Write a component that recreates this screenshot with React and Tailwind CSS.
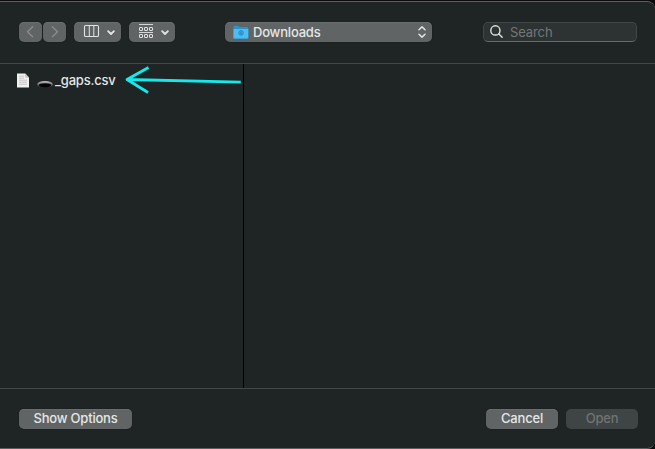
import React from "react";

const button =
  "flex h-5 shrink-0 items-center rounded-[5px] bg-[#606464] shadow-[inset_0_1px_0_#6b6e6e,0_0_1px_#101414]";

function Chevron({ flip }) {
  return (
    <svg className="h-5 w-[23px]" viewBox="0 0 23 20" fill="none" stroke="#8c8f8f" strokeWidth="1.2" strokeLinecap="round" strokeLinejoin="round">
      <path d={flip ? "M9.3 4.7 14.5 9.7 9.3 14.7" : "M13.7 4.7 8.5 9.7 13.7 14.7"} />
    </svg>
  );
}

function ColumnsMenu() {
  return (
    <svg className="h-5 w-[47px]" viewBox="0 0 47 20" fill="none" stroke="#e2e4e4">
      <rect x="10.5" y="3.5" width="14" height="11" rx="1.3" strokeWidth="1.1" />
      <path d="M15.3 4v10.500M19.8 4v10.500" strokeWidth="1" />
      <path d="m34.1 9.1 2.9 2.9 2.9-2.900" strokeWidth="1.8" strokeLinecap="round" strokeLinejoin="round" />
    </svg>
  );
}

function GroupMenu() {
  return (
    <svg className="h-5 w-[46px]" viewBox="0 0 46 20" fill="none" stroke="#e2e4e4">
      <path d="M10 2.500h14M10 10.500h14" strokeWidth="0.900" />
      <g strokeWidth="1">
        <rect x="10.500" y="5.500" width="3" height="3" rx=".5" />
        <rect x="15.500" y="5.500" width="3" height="3" rx=".5" />
        <rect x="20.500" y="5.500" width="3" height="3" rx=".5" />
        <rect x="10.500" y="12.500" width="3" height="3" rx=".5" />
        <rect x="15.500" y="12.500" width="3" height="3" rx=".5" />
        <rect x="20.500" y="12.500" width="3" height="3" rx=".5" />
      </g>
      <path d="m33.1 9.1 2.9 2.9 2.9-2.900" strokeWidth="1.8" strokeLinecap="round" strokeLinejoin="round" />
    </svg>
  );
}

function FolderIcon() {
  return (
    <svg className="h-[15px] w-4 shrink-0" viewBox="0 0 16 15">
      <path d="M.5 2Q.5.8 1.700.8h3.600l1.300 1.100h7.500q1.200 0 1.200 1.200v9.800q0 1.100-1.200 1.100H1.700Q.5 14 .5 12.900Z" fill="#2795d2" />
      <path d="M.5 4h14.800v8.900q0 1.100-1.200 1.100H1.700Q.5 14 .5 12.900Z" fill="#4fbdf1" />
      <path d="M.8 13.400h14.200" stroke="#2c9bd6" strokeWidth=".8" />
      <circle cx="8" cy="7.900" r="2.300" fill="#3ba6dc" stroke="#2589bd" strokeWidth=".9" />
      <path d="M8 6.800v2M7.200 8.100l.8.8.8-.8" stroke="#2581b2" strokeWidth=".6" fill="none" />
    </svg>
  );
}

function FileIcon() {
  return (
    <svg className="h-[15px] w-3 shrink-0" viewBox="0 0 12 15">
      <path d="M0 .5h8.200L12 4.400v10H0Z" fill="#f0f0f0" />
      <path d="M8.200.5v3.900H12Z" fill="#bfc1c1" />
      <path d="M2 3.200h5M2 5.200h5M2 7.200h8M2 9.200h8M2 11.200h8" stroke="#b4b6b6" strokeWidth=".7" />
    </svg>
  );
}

function HoleIcon() {
  return (
    <svg className="h-[7px] w-4 shrink-0" viewBox="0 0 16 7">
      <defs>
        <linearGradient id="rim" x1="0" y1="0" x2="0" y2="1">
          <stop offset="0" stopColor="#c2c5c5" />
          <stop offset=".5" stopColor="#6a6e6e" />
          <stop offset="1" stopColor="#303434" />
        </linearGradient>
      </defs>
      <ellipse cx="8" cy="3.400" rx="7.800" ry="3.300" fill="url(#rim)" />
      <ellipse cx="8" cy="4.300" rx="6.300" ry="2.100" fill="#030404" />
    </svg>
  );
}

export default function App() {
  return (
    <div className="h-[449px] w-[655px] overflow-hidden bg-[#090b0c] pt-px font-['Inter','Liberation_Sans',sans-serif] text-[13px] font-medium tracking-[-0.2px] text-[#e5e7e7]">
      <div className="flex h-[448px] flex-col rounded-r-[8px] border-y border-t-[#5c5f60] border-b-[#5c5f60] bg-[#1f2424]">
        <header className="flex h-[62px] shrink-0 items-start border-b border-[#424747] pt-5 pl-[19px]">
          <div className="flex gap-px">
            <button className={`${button} w-[23px]`} aria-label="Back"><Chevron /></button>
            <button className={`${button} w-[23px]`} aria-label="Forward"><Chevron flip /></button>
          </div>
          <button className={`${button} ml-2 w-[47px]`} aria-label="Columns"><ColumnsMenu /></button>
          <button className={`${button} ml-2 w-[46px]`} aria-label="Group"><GroupMenu /></button>
          <button className={`${button} ml-[50px] w-[207px] pl-2`}>
            <FolderIcon />
            <span className="ml-1 -mt-px leading-5">Downloads</span>
            <svg className="mr-[6px] ml-auto h-5 w-2" viewBox="0 0 8 20" fill="none" stroke="#e2e4e4" strokeWidth="1.500" strokeLinecap="round" strokeLinejoin="round">
              <path d="M1 7.700 4 4.900l3 2.800M1 12.300l3 2.800 3-2.800" />
            </svg>
          </button>
          <div className="ml-[51px] flex h-5 w-[154px] items-center rounded-[5px] border border-[#414646] border-b-[#666a6a] bg-[#2d3232] pl-[6px] font-normal tracking-[-0.1px] text-[#747878]">
            <svg className="h-[14px] w-[14px]" viewBox="0 0 14 14" fill="none" stroke="#dfe1e1" strokeWidth="1.400" strokeLinecap="round">
              <circle cx="5.400" cy="5.400" r="4.600" />
              <path d="m8.900 8.900 3.300 3.300" />
            </svg>
            <span className="ml-[6px] leading-[18px]">Search</span>
          </div>
        </header>
        <main className="flex min-h-0 flex-1">
          <section className="relative w-[244px] shrink-0 border-r border-black pt-2">
            <div className="flex h-4 items-center pl-[17px]">
              <FileIcon />
              <span className="mt-[9px] ml-2 flex"><HoleIcon /></span>
              <span className="ml-[2px] leading-4">_gaps.csv</span>
            </div>
            <svg className="absolute top-0 left-[120px] h-8 w-[123px]" viewBox="0 0 123 32" fill="none" stroke="#16e9eb" strokeWidth="2.800">
              <path d="M7 15.500 120.800 18.200M28.500 3.500 7 15.500 28 28.500" strokeLinejoin="round" />
            </svg>
          </section>
          <section className="flex-1" />
        </main>
        <footer className="flex h-[60px] shrink-0 items-start border-t border-[#424747] pt-5 pr-[17px] pl-[19px]">
          <button className={`${button} w-[113px] justify-center`}>Show Options</button>
          <button className={`${button} ml-auto w-[72px] justify-center`}>Cancel</button>
          <button className="ml-2 flex h-5 w-[72px] items-center justify-center rounded-[5px] bg-[#3f4444] text-[#707474]">Open</button>
        </footer>
      </div>
    </div>
  );
}
